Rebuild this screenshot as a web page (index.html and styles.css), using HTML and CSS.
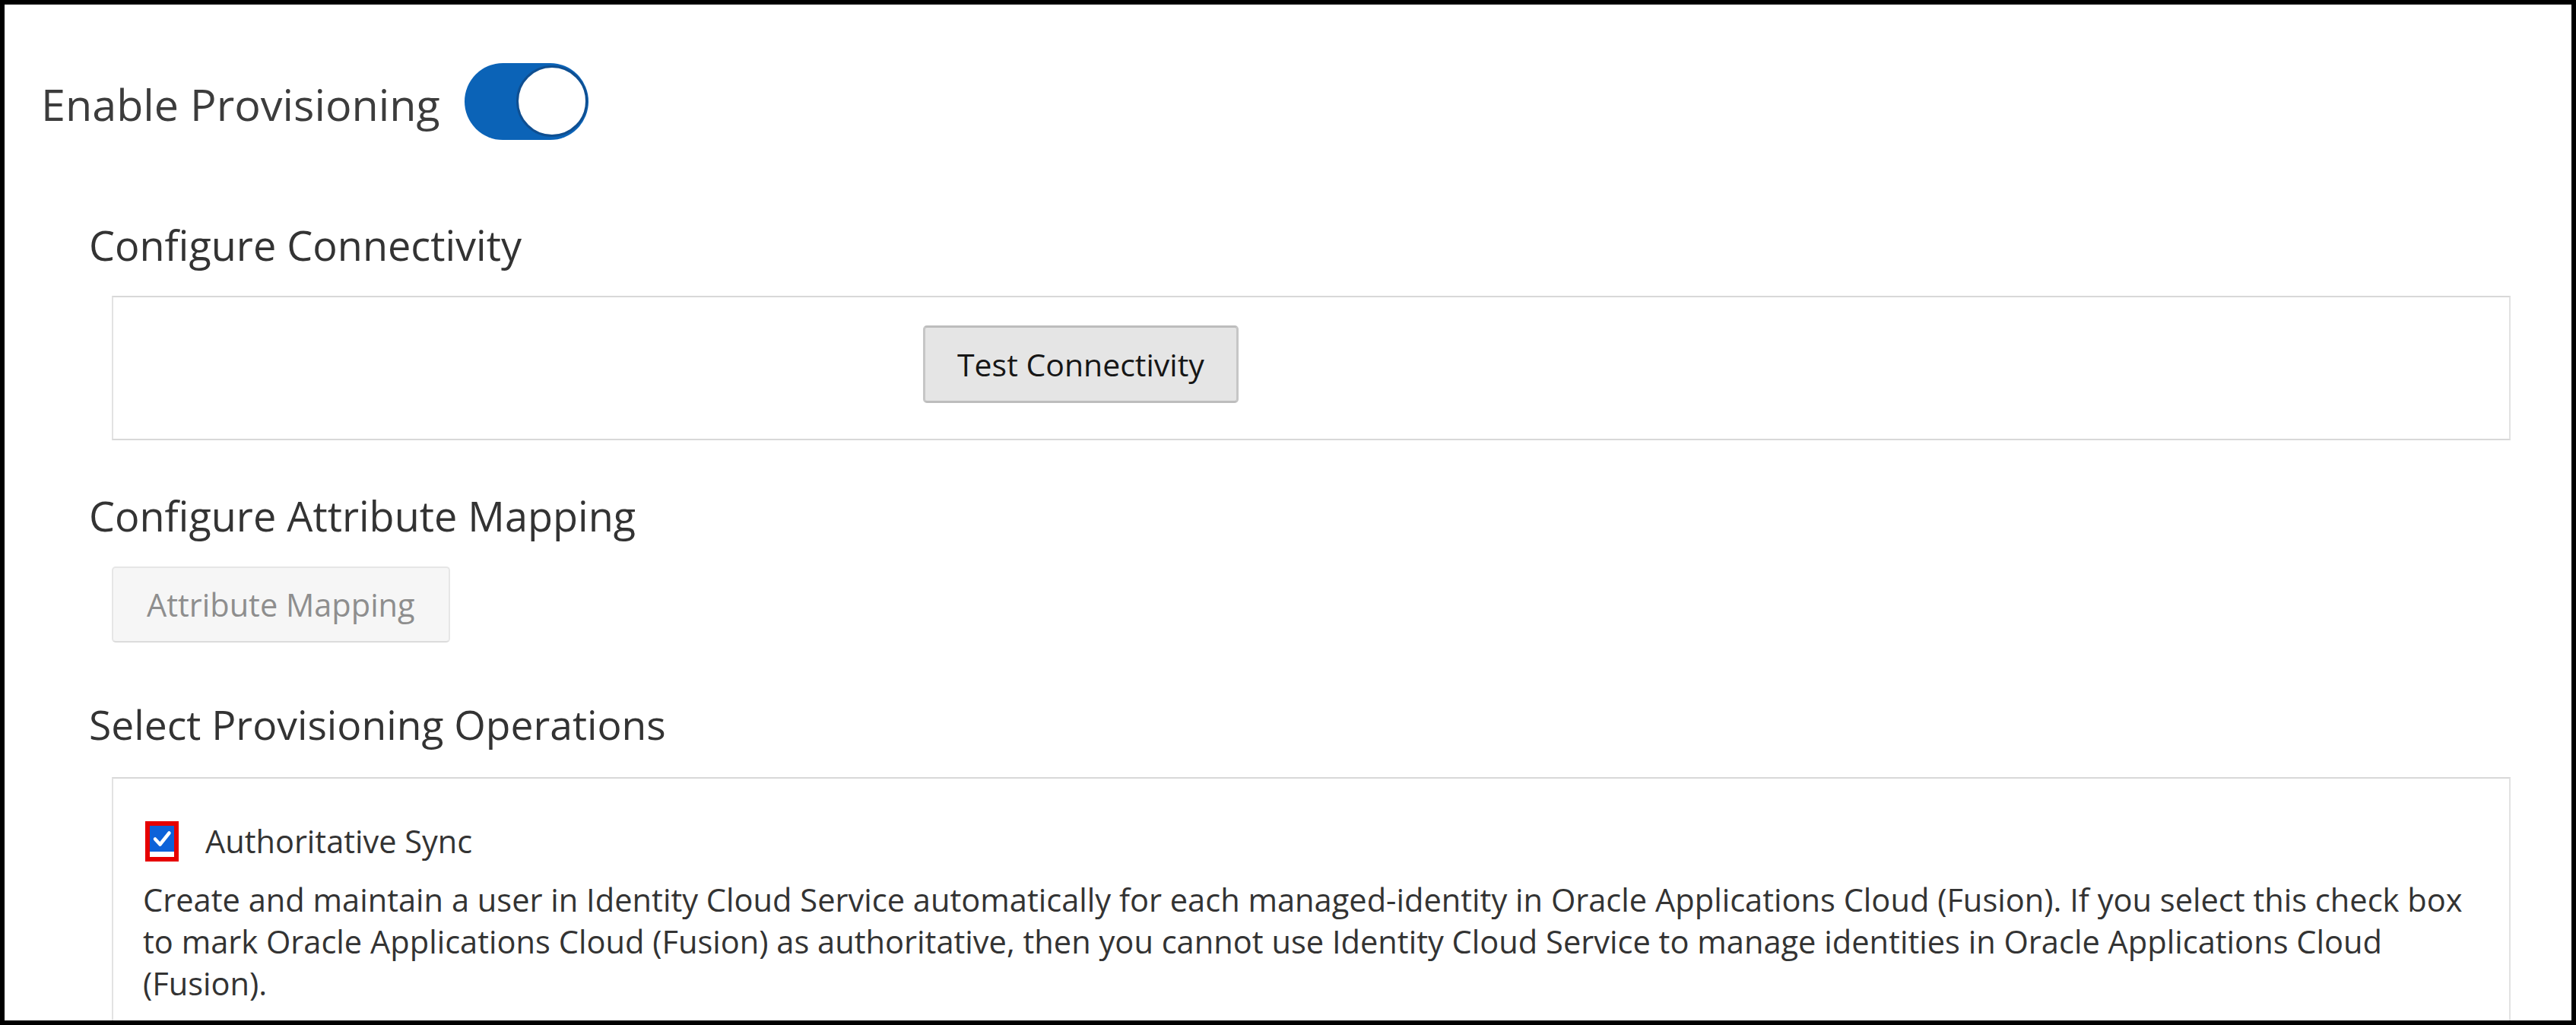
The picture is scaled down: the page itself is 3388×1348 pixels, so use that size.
FILE: index.html
```html
<!DOCTYPE html>
<html lang="en">
<head>
<meta charset="utf-8">
<title>Enable Provisioning</title>
<link rel="stylesheet" href="styles.css">
</head>
<body>
<div class="page">
  <div class="enable-row">
    <span class="enable-label">Enable Provisioning</span>
    <span class="toggle" role="switch" aria-checked="true"><span class="knob"></span></span>
  </div>

  <section class="section sec-conn">
    <h2 class="heading">Configure Connectivity</h2>
    <div class="panel panel-conn">
      <div class="form-label"></div>
      <button class="btn">Test Connectivity</button>
    </div>
  </section>

  <section class="section sec-attr">
    <h2 class="heading">Configure Attribute Mapping</h2>
    <button class="btn btn-disabled attr-btn" disabled>Attribute Mapping</button>
  </section>

  <section class="section sec-ops">
    <h2 class="heading heading-ops">Select Provisioning Operations</h2>
    <div class="panel panel-ops">
      <div class="check-row">
        <span class="cb-highlight">
          <span class="cb">
            <svg viewBox="0 0 32 34" width="32" height="34"><path d="M7 17.5 L13.5 24.5 L25.5 9.5" fill="none" stroke="#fff" stroke-width="4.5" stroke-linecap="round" stroke-linejoin="round"/></svg>
          </span>
        </span>
        <span class="check-label">Authoritative Sync</span>
      </div>
      <p class="desc">Create and maintain a user in Identity Cloud Service automatically for each managed-identity in Oracle Applications Cloud (Fusion). If you select this check box to mark Oracle Applications Cloud (Fusion) as authoritative, then you cannot use Identity Cloud Service to manage identities in Oracle Applications Cloud (Fusion).</p>
    </div>
  </section>
</div>
</body>
</html>
```
FILE: styles.css
```css
html, body {
  margin: 0;
  padding: 0;
  background: #fff;
}
body {
  font-family: "Open Sans", "Noto Sans", sans-serif;
  color: #333;
}
.page {
  box-sizing: border-box;
  width: 100%;
  height: 1348px;
  border: 6px solid #000;
  padding: 0 80px 0 48px;
  overflow: hidden;
}
.enable-row {
  display: flex;
  align-items: center;
  gap: 32px;
  padding-top: 76px;
  height: 102px;
}
.enable-label {
  font-size: 57.5px;
  color: #3c3c3c;
  line-height: 1;
  padding-top: 9px;
}
.toggle {
  box-sizing: border-box;
  display: flex;
  justify-content: flex-end;
  align-items: center;
  width: 163px;
  height: 101px;
  border-radius: 51px;
  background: #0b63b7;
  padding: 0 1px;
}
.knob {
  box-sizing: border-box;
  width: 94px;
  height: 94px;
  border-radius: 50%;
  background: #fff;
  border: 3px solid #0f4f91;
}
.section {
  margin-left: 63px;
}
.heading {
  margin: 0;
  font-size: 54px;
  line-height: 72px;
  font-weight: 400;
  color: #333;
}
.heading-ops {
  font-size: 53.4px;
}
.sec-conn { margin-top: 102px; }
.sec-attr { margin-top: 63px; }
.sec-ops { margin-top: 72px; }
.panel {
  margin-left: 30px;
  margin-top: 31px;
  border: 2px solid #e2e2e2;
  border-top-color: #d8d8d8;
  border-bottom-color: #d8d8d8;
  background: #fff;
}
.panel-conn {
  display: grid;
  grid-template-columns: 1065px auto;
  align-items: start;
  justify-content: start;
  padding: 37px 0 47px;
}
.btn {
  box-sizing: border-box;
  height: 102px;
  padding: 0 42px;
  font-family: "Open Sans", "Noto Sans", sans-serif;
  font-size: 41px;
  color: #161616;
  background: #e5e5e5;
  border: 3px solid #c6c6c6;
  border-top-color: #bdbdbd;
  border-bottom-color: #bdbdbd;
  border-radius: 5px;
}
.attr-btn {
  display: block;
  margin-left: 30px;
  margin-top: 31px;
  height: 100px;
  padding: 0 44px;
  font-size: 41.5px;
}
.btn-disabled {
  background: #f6f6f6;
  color: #8e8e8e;
  border: 2px solid #e6e6e6;
  border-bottom-color: #dcdcdc;
}
.panel-ops {
  margin-top: 33px;
  padding: 56px 40px 40px 39px;
  border-bottom: none;
  min-height: 400px;
}
.check-row {
  display: flex;
  align-items: center;
  gap: 35px;
  margin-left: 3px;
}
.cb-highlight {
  display: block;
  width: 32px;
  height: 41px;
  border: 6px solid #e60000;
  background: #fff;
}
.cb {
  display: block;
  width: 32px;
  height: 34px;
  background: #0d62d9;
}
.cb svg { display: block; }
.check-label {
  font-size: 41.5px;
  color: #333;
  line-height: 1.2;
}
.desc {
  margin: 23px 0 0;
  font-size: 41.6px;
  line-height: 55px;
  color: #333;
}
```
